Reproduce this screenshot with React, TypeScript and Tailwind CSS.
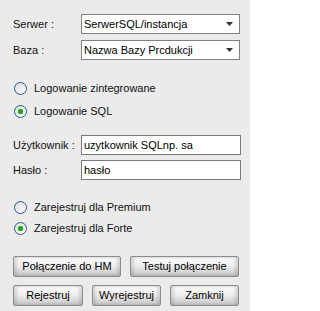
import React from "react";

const font = "font-['Liberation_Sans',Arial,sans-serif]";

const Combo = ({ value }: { value: string }) => (
  <div className="flex h-[20px] w-[159px] items-center justify-between border border-[#828282] bg-white pl-[2px] pr-[6px]">
    <span className="text-[11px] leading-none text-black">{value}</span>
    <svg width="7" height="4" viewBox="0 0 7 4">
      <path d="M0 0h7L3.5 4z" fill="#333" />
    </svg>
  </div>
);

const TextField = ({ value }: { value: string }) => (
  <div className="flex h-[20px] w-[160px] items-center border border-[#7a7a7a] bg-white pl-[2px]">
    <span className="text-[11px] leading-none text-black">{value}</span>
  </div>
);

const Radio = ({ label, checked }: { label: string; checked?: boolean }) => (
  <div className="flex h-[18px] items-center">
    <span className="ml-[2px] flex h-[13px] w-[13px] items-center justify-center rounded-full border border-[#2c5a86] bg-gradient-to-br from-[#dcdcdc] to-white">
      {checked && (
        <span className="h-[5px] w-[5px] rounded-full bg-[#21a121] shadow-[0_0_1px_#5fd35f]" />
      )}
    </span>
    <span className="ml-[7px] text-[11px] leading-none text-[#111]">{label}</span>
  </div>
);

const Btn = ({ label, w }: { label: string; w: string }) => (
  <button
    className={`${w} flex h-[21px] items-center justify-center rounded-[2px] border border-[#8c8c8c] bg-gradient-to-b from-[#fbfbfb] via-[#efefef] via-45% to-[#c6c6c6] text-[11px] leading-none text-black shadow-[inset_3px_0_3px_rgba(0,0,0,0.12),inset_-3px_0_3px_rgba(0,0,0,0.12)]`}
  >
    {label}
  </button>
);

export default function App() {
  return (
    <div className={`${font} h-[311px] w-[250px] overflow-hidden bg-[#ebebeb] pl-[12px] pt-[14px]`}>
      <div className="flex flex-col gap-[6px]">
        <div className="flex items-center">
          <span className="w-[69px] pl-[1px] text-[11px] leading-none text-[#111]">Serwer :</span>
          <Combo value="SerwerSQL/instancja" />
        </div>
        <div className="flex items-center">
          <span className="w-[69px] pl-[1px] text-[11px] leading-none text-[#111]">Baza :</span>
          <Combo value="Nazwa Bazy Prcdukcji" />
        </div>
      </div>

      <div className="mt-[19px] flex flex-col gap-[5px]">
        <Radio label="Logowanie zintegrowane" />
        <Radio label="Logowanie SQL" checked />
      </div>

      <div className="mt-[15px] flex flex-col gap-[5px]">
        <div className="flex items-center">
          <span className="w-[69px] pl-[1px] text-[11px] leading-none text-[#111]">Użytkownik :</span>
          <TextField value="uzytkownik SQLnp. sa" />
        </div>
        <div className="flex items-center">
          <span className="w-[69px] pl-[1px] text-[11px] leading-none text-[#111]">Hasło :</span>
          <TextField value="hasło" />
        </div>
      </div>

      <div className="mt-[18px] flex flex-col gap-[3px]">
        <Radio label="Zarejestruj dla Premium" />
        <Radio label="Zarejestruj dla Forte" checked />
      </div>

      <div className="mt-[19px] flex flex-col gap-[8px] pl-[1px]">
        <div className="flex gap-[9px]">
          <Btn label="Połączenie do HM" w="w-[108px]" />
          <Btn label="Testuj połączenie" w="w-[109px]" />
        </div>
        <div className="flex gap-[9px]">
          <Btn label="Rejestruj" w="w-[70px]" />
          <Btn label="Wyrejestruj" w="w-[69px]" />
          <Btn label="Zamknij" w="w-[69px]" />
        </div>
      </div>
    </div>
  );
}
